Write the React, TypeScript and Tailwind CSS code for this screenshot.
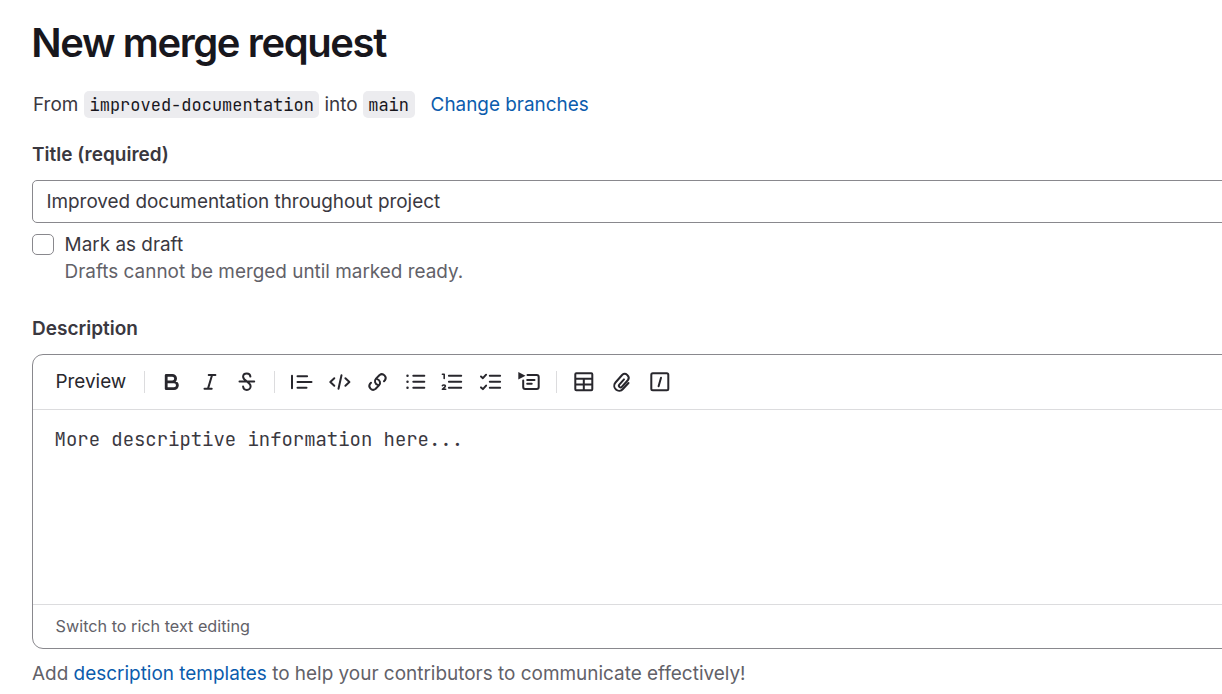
import type { ReactNode } from "react";

function Icon({ label, children }: { label: string; children: ReactNode }) {
  return (
    <button aria-label={label} className="block h-6 w-6 shrink-0">
      <svg
        viewBox="0 0 24 24"
        className="block h-6 w-6"
        fill="none"
        stroke="#28272d"
        strokeWidth="2"
        strokeLinecap="round"
        strokeLinejoin="round"
      >
        {children}
      </svg>
    </button>
  );
}

function Divider() {
  return <div className="h-[22px] w-px shrink-0 bg-[#dcdcde]" />;
}

function Toolbar() {
  return (
    <div className="flex h-[55px] items-center border-b border-[#dcdcde] pl-[22.5px]">
      <button className="w-[71.5px] pb-[2px] text-left text-[18.9px] leading-[27px] text-[#28272d]">Preview</button>
      <div className="ml-[17px] flex items-center">
        <Divider />
      </div>
      <div className="ml-[15px] flex gap-[13.8px]">
        <Icon label="Bold">
          <path d="M6.200 5.300h6.100a3.300 3.300 0 0 1 0 6.600H6.200zM6.200 11.900h7.800a3.400 3.400 0 0 1 0 6.800H6.200z" strokeWidth="2.800" />
        </Icon>
        <Icon label="Italic">
          <path d="M10.700 5h6.700M6.500 18.800h7.200M14 5.200l-4 13.400" />
        </Icon>
        <Icon label="Strikethrough">
          <path d="M14.400 6.600c-.2-2-1.600-3.200-3.600-3.200-2.200 0-3.700 1.300-3.700 3.300 0 2 1.300 3 3.700 4.700 2.500 1.800 3.800 2.800 3.800 4.900 0 2-1.600 3.600-3.800 3.600-2.100 0-3.500-1.400-3.700-3.400M3.500 11.600h14.700" />
        </Icon>
      </div>
      <div className="ml-[14.4px] flex items-center">
        <Divider />
      </div>
      <div className="ml-[14px] flex gap-[13.8px]">
        <Icon label="Quote">
          <path d="M3 5.800v12.500M8.500 6.200h9.600M8.500 12h14M8.500 17.700h9" />
        </Icon>
        <Icon label="Code">
          <path d="M14.500 5.200l-3 13.500M7.300 8.300l-4 3.700 4 3.700M18.400 8.300l4 3.700-4 3.700" />
        </Icon>
        <Icon label="Link">
          <path d="M19 11.200l.9-.9a3.800 3.800 0 0 0-5.300-5.300l-3.600 3.600a3.800 3.800 0 0 0 1.800 6.300M6 12.800l-.9.9a3.800 3.800 0 0 0 5.300 5.300l3.600-3.600a3.800 3.800 0 0 0-1.800-6.300" />
        </Icon>
        <Icon label="Bulleted list">
          <path d="M11.300 5.800h11M11.300 11.800h11M11.300 17.800h11" />
          <path d="M5.500 5.800h.01M5.500 11.800h.01M5.500 17.800h.01" strokeWidth="2.500" />
        </Icon>
        <Icon label="Numbered list">
          <path d="M8.900 5.800h12.300M8.900 11.800h12.300M8.900 17.800h12.300" />
          <path d="M2.400 4.200h1.800v4.300M2.400 15.700c.5-.9 3-.9 3 .4 0 1-1.500 1.800-3 3.200h3.300" strokeWidth="1.600" />
        </Icon>
        <Icon label="Task list">
          <path d="M11.800 5.800h10.300M11.800 11.800h10.300M11.800 17.800h10.300" />
          <path d="M3 6.500l1.900 1.700 3.200-3.500M3 17.400l1.900 1.700 3.200-3.500" />
        </Icon>
        <Icon label="Collapsible section">
          <path d="M11.500 5h9.200a2 2 0 0 1 2 2v10a2 2 0 0 1-2 2H9.200a2 2 0 0 1-2-2v-6.500M11.200 10.100h7.300M11.200 13.700h4.500" />
          <path d="M2.300 2l7.200 3.700-7.200 3.700z" fill="#28272d" stroke="none" />
        </Icon>
      </div>
      <div className="ml-[16px] flex items-center">
        <Divider />
      </div>
      <div className="ml-[15px] flex gap-[14px]">
        <Icon label="Table">
          <path d="M4.300 3.300h15a1 1 0 0 1 1 1v15a1 1 0 0 1-1 1h-15a1 1 0 0 1-1-1v-15a1 1 0 0 1 1-1zM3.500 8.700h16.600M3.500 14.500h16.600M11.800 8.700v11.500" />
        </Icon>
        <Icon label="Attach a file">
          <path d="M18.500 13l-5.600 6a4.900 4.900 0 0 1-7.400-6.500l6.600-7.500a3.900 3.900 0 0 1 5.900 5l-6.200 6.800a1.600 1.600 0 0 1-2.500-2.100l4.700-5.300" />
        </Icon>
        <Icon label="Quick action">
          <rect x="3.300" y="3.300" width="17" height="17" rx="1.500" />
          <path d="M13 7.800l-2.400 8.400" />
        </Icon>
      </div>
    </div>
  );
}

export default function App() {
  return (
    <main className="h-[694px] w-full overflow-hidden bg-white pl-8 font-['GitLab_Sans','Inter',sans-serif] text-[18.92px] leading-[27px] text-[#3a383f]">
      <h1 className="-ml-[0.7px] pt-[19px] text-[40px] font-semibold leading-[48px] tracking-[-1.4px] text-[#18171d]">
        New merge request
      </h1>
      <div className="mt-6 flex h-[27px] items-center whitespace-nowrap pl-px">
        <span className="w-[51px]">From</span>
        <code className="h-[27px] w-[235px] rounded-[5px] bg-[#ececef] pl-[5.500px] pt-px font-['JetBrains_Mono','DejaVu_Sans_Mono',monospace] text-[17px] text-[#18171d]">
          improved-documentation
        </code>
        <span className="ml-[5.500px] w-[38.500px]">into</span>
        <code className="h-[27px] w-[52px] rounded-[5px] bg-[#ececef] pl-[5.200px] pt-px font-['JetBrains_Mono','DejaVu_Sans_Mono',monospace] text-[17px] text-[#18171d]">
          main
        </code>
        <a href="#" className="ml-[15.600px] text-[18.9px] text-[#0b5cad]">Change branches</a>
      </div>
      <div className="mt-[23px] text-[19px] font-semibold">Title (required)</div>
      <div className="-mr-4 mt-3 flex h-[43px] items-center rounded-[5px] border border-[#89888d] pl-[13.400px] text-[18.9px]">
        Improved documentation throughout project
      </div>
      <label className="mt-2 flex">
        <span className="mt-[3px] h-[21px] w-[22px] rounded-[5px] border border-[#89888d]" />
        <span className="ml-[10.600px]">
          <span className="block">Mark as draft</span>
          <span className="block text-[#626168]">Drafts cannot be merged until marked ready.</span>
        </span>
      </label>
      <div className="mt-[30px] text-[19px] font-semibold">Description</div>
      <section className="-mr-4 mt-3 h-[295px] rounded-[11px] border border-[#89888d]">
        <Toolbar />
        <div className="h-[194px] pl-[21.600px] pt-[16px] font-['JetBrains_Mono','DejaVu_Sans_Mono',monospace] [font-variant-ligatures:none]">
          More descriptive information here...
        </div>
        <div className="flex h-[44px] items-center border-t border-[#dcdcde] pl-[22.600px] text-[16.2px] text-[#626168]">
          Switch to rich text editing
        </div>
      </section>
      <p className="mt-[11px] text-[18.96px] text-[#626168]">
        Add <a href="#" className="text-[#0b5cad]">description templates</a> to help your contributors to communicate effectively!
      </p>
    </main>
  );
}
